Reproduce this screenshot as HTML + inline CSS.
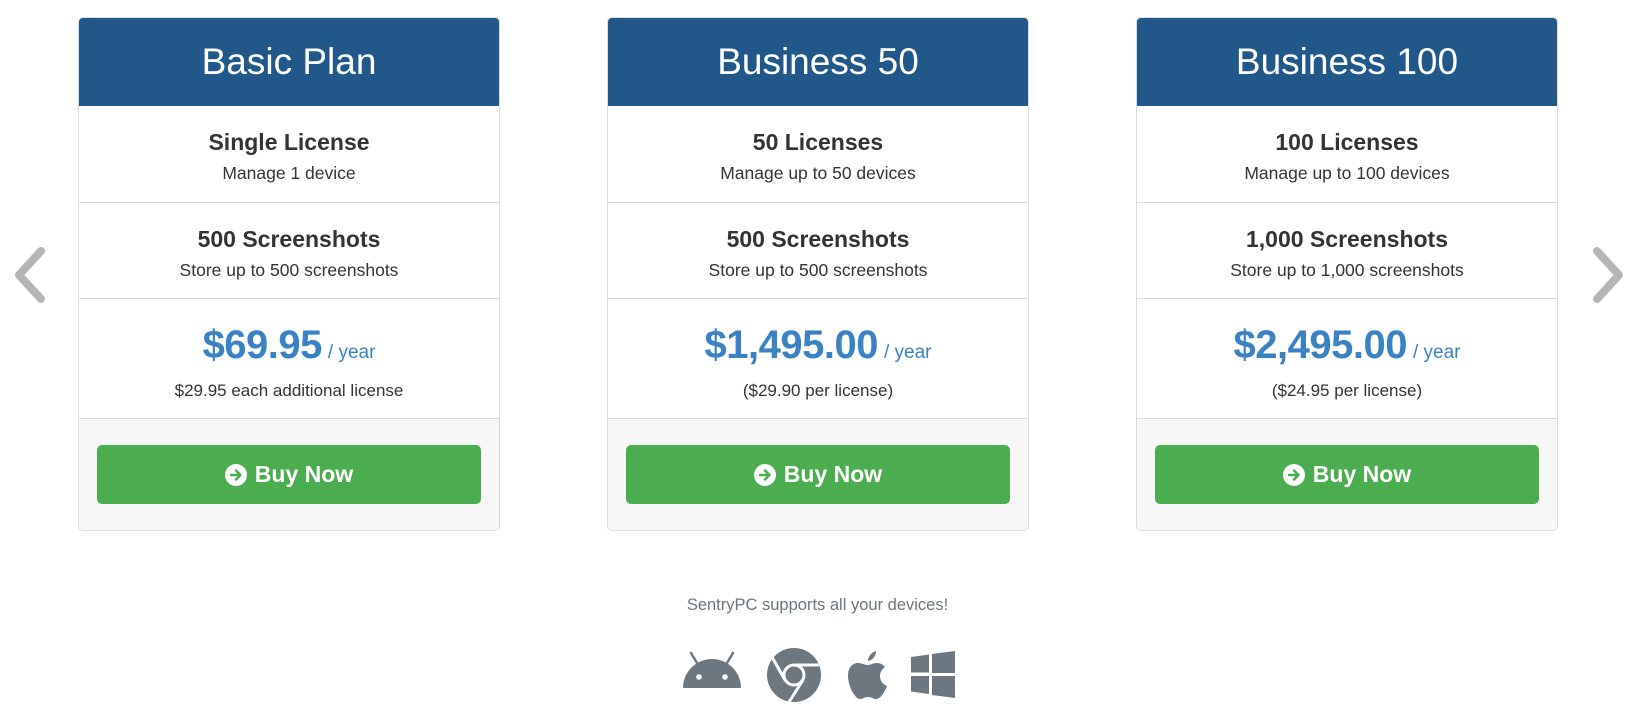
<!DOCTYPE html>
<html><head><meta charset="utf-8"><style>
*{box-sizing:border-box;margin:0;padding:0}
body{width:1635px;height:711px;background:#fff;font-family:"Liberation Sans",sans-serif;position:relative;overflow:hidden;color:#333}
.card{position:absolute;top:17px;width:422px;height:514px;border:1px solid #ddd;border-radius:5px;overflow:hidden;background:#fff}
.hd{height:88px;background:#225889;color:#fff;font-size:37px;text-align:center;line-height:88px}
.row{border-bottom:1px solid #ddd;text-align:center}
.r1{height:97px;padding-top:21px}
.r2{height:96px;padding-top:21px}
.t{font-size:23px;font-weight:bold;line-height:30px;color:#333}
.s{font-size:17.5px;line-height:24px;margin-top:4px;color:#333}
.r3{height:120px;padding-top:24px}
.p{color:#3a82c4;font-size:40px;font-weight:bold;line-height:44px;letter-spacing:-0.5px}
.p span{font-size:19px;font-weight:normal;letter-spacing:0;margin-left:6px}
.ps{font-size:17px;line-height:24px;margin-top:4px}
.ft{background:#f7f7f7;height:113px;padding:26px 18px 0}
.btn{height:59px;background:#4cad50;border-radius:5px;color:#fff;font-size:23px;font-weight:bold;display:flex;align-items:center;justify-content:center;gap:8px}
.chev{position:absolute;top:246px}
.foot{position:absolute;top:596px;left:0;width:1635px;text-align:center;color:#6c757d;font-size:16.5px}
</style></head><body>
<svg class="chev" style="left:12px" width="36" height="58" viewBox="0 0 36 58"><path d="M29 5 L7 29 L29 53" fill="none" stroke="#b5b5b5" stroke-width="8" stroke-linecap="round" stroke-linejoin="round"/></svg>
<svg class="chev" style="left:1590px" width="36" height="58" viewBox="0 0 36 58"><path d="M7 5 L29 29 L7 53" fill="none" stroke="#b5b5b5" stroke-width="8" stroke-linecap="round" stroke-linejoin="round"/></svg>

<div class="card" style="left:78px">
<div class="hd">Basic Plan</div>
<div class="row r1"><div class="t">Single License</div><div class="s">Manage 1 device</div></div>
<div class="row r2"><div class="t">500 Screenshots</div><div class="s">Store up to 500 screenshots</div></div>
<div class="row r3"><div class="p">$69.95<span>/ year</span></div><div class="ps">$29.95 each additional license</div></div>
<div class="ft"><div class="btn"><svg width="22" height="22" viewBox="0 0 22 22"><circle cx="11" cy="11" r="11" fill="#fff"/><path d="M6 11h9M11 6.5l4.5 4.5-4.5 4.5" stroke="#4cad50" stroke-width="2.4" fill="none" stroke-linecap="round" stroke-linejoin="round"/></svg>Buy Now</div></div>
</div>

<div class="card" style="left:607px">
<div class="hd">Business 50</div>
<div class="row r1"><div class="t">50 Licenses</div><div class="s">Manage up to 50 devices</div></div>
<div class="row r2"><div class="t">500 Screenshots</div><div class="s">Store up to 500 screenshots</div></div>
<div class="row r3"><div class="p">$1,495.00<span>/ year</span></div><div class="ps">($29.90 per license)</div></div>
<div class="ft"><div class="btn"><svg width="22" height="22" viewBox="0 0 22 22"><circle cx="11" cy="11" r="11" fill="#fff"/><path d="M6 11h9M11 6.5l4.5 4.5-4.5 4.5" stroke="#4cad50" stroke-width="2.4" fill="none" stroke-linecap="round" stroke-linejoin="round"/></svg>Buy Now</div></div>
</div>

<div class="card" style="left:1136px">
<div class="hd">Business 100</div>
<div class="row r1"><div class="t">100 Licenses</div><div class="s">Manage up to 100 devices</div></div>
<div class="row r2"><div class="t">1,000 Screenshots</div><div class="s">Store up to 1,000 screenshots</div></div>
<div class="row r3"><div class="p">$2,495.00<span>/ year</span></div><div class="ps">($24.95 per license)</div></div>
<div class="ft"><div class="btn"><svg width="22" height="22" viewBox="0 0 22 22"><circle cx="11" cy="11" r="11" fill="#fff"/><path d="M6 11h9M11 6.5l4.5 4.5-4.5 4.5" stroke="#4cad50" stroke-width="2.4" fill="none" stroke-linecap="round" stroke-linejoin="round"/></svg>Buy Now</div></div>
</div>

<div class="foot">SentryPC supports all your devices!</div>

<svg style="position:absolute;left:675px;top:645px" width="300" height="60" viewBox="0 0 300 60">
<g fill="#6c7780">
<line x1="16" y1="8" x2="22" y2="18" stroke="#6c7780" stroke-width="2.5" stroke-linecap="round"/>
<line x1="58" y1="8" x2="52" y2="18" stroke="#6c7780" stroke-width="2.5" stroke-linecap="round"/>
<path d="M8 43 A29 29 0 0 1 66 43 Z"/>
<circle cx="24" cy="32" r="2.8" fill="#fff"/><circle cx="50" cy="32" r="2.8" fill="#fff"/>
<circle cx="119" cy="30" r="27"/>
<circle cx="119" cy="30" r="10" fill="none" stroke="#fff" stroke-width="3"/>
<path d="M119 20 L144 20" stroke="#fff" stroke-width="3"/>
<path d="M110 35 L97 12" stroke="#fff" stroke-width="3"/>
<path d="M128 35 L114 57" stroke="#fff" stroke-width="3"/>
<g transform="translate(172,4)">
<path d="M21 16 C17 16 15 14 11 14 C5 14 1 19 1 27 C1 37 8 50 13 50 C16 50 17 48 21 48 C25 48 26 50 29 50 C34 50 38 42 40 37 C35 35 33 31 33 27 C33 23 35 20 38 18 C35 14 31 14 29 14 C26 14 24 16 21 16 Z"/>
<path d="M21 12 C21 7 25 3 29 2 C29 7 26 11 21 12 Z"/>
</g>
<path d="M236 12l18-2.5v18h-18zM257 9l23-3v22h-23zM236 31h18v18l-18-2.5zM257 31h23v22l-23-3z"/>
</g>
</svg>
</body></html>
